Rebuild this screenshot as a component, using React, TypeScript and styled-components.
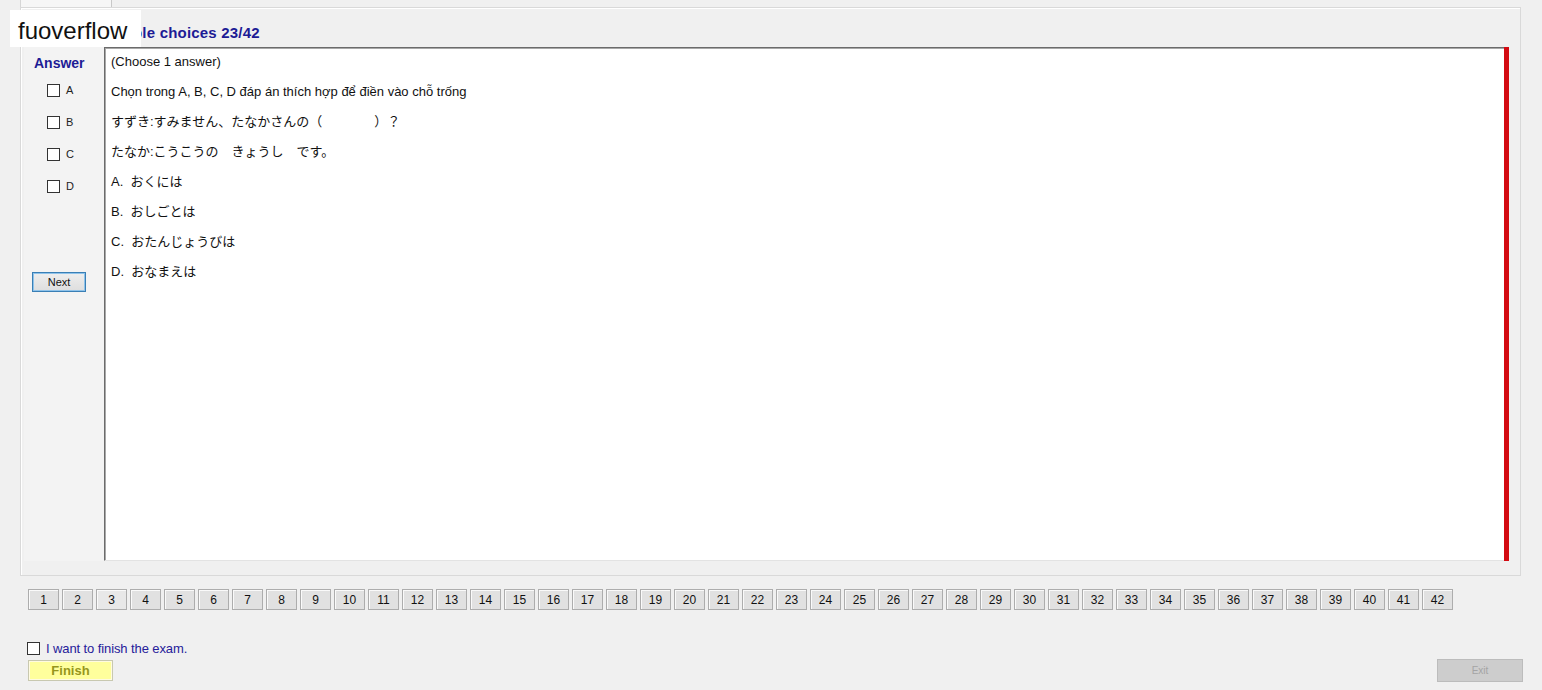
import React, { useState } from "react";
import styled, { createGlobalStyle } from "styled-components";

// globals
//--------------------------
const GlobalStyle = createGlobalStyle`
  html, body {
    margin: 0;
    padding: 0;
    background: #f0f0f0;
  }
  body {
    font-family: "Liberation Sans", "Noto Sans CJK JP", Arial, sans-serif;
    font-size: 12px;
    color: #000;
  }
`;

// styled-components
//--------------------------
const Page = styled.div`
  position: relative;
  width: 1542px;
  height: 690px;
  overflow: hidden;
  background: #f0f0f0;
`;

const TabStrip = styled.div`
  display: flex;
  height: 7px;
  padding-left: 20px;
`;

const TabPiece = styled.div`
  width: 90px;
  background: #f6f6f6;
  border-left: 1px solid #d6d6d6;
  border-right: 1px solid #c8c8c8;
`;

const GroupBox = styled.div`
  margin: 0 21px 0 20px;
  height: 569px;
  box-sizing: border-box;
  border: 1px solid #d9d9d9;
  box-shadow: inset 1px 1px 0 #fff;
  display: flex;
  flex-direction: column;
  padding: 0 11px 14px 3px;
`;

const Title = styled.div`
  height: 39px;
  box-sizing: border-box;
  display: flex;
  align-items: center;
  padding: 10px 0 0 73px;
  font-weight: bold;
  font-size: 15px;
  letter-spacing: 0.2px;
  color: #1d1b95;
`;

const Content = styled.div`
  flex: 1;
  display: flex;
`;

const AnswerPanel = styled.div`
  width: 80px;
  background: #f3f3f3;
  display: flex;
  flex-direction: column;
  align-items: flex-start;
`;

const AnswerLabel = styled.div`
  font-weight: bold;
  font-size: 14px;
  line-height: 16px;
  color: #1d1b95;
  margin: 8px 0 3px 10px;
`;

const ChoiceRow = styled.label`
  display: flex;
  align-items: center;
  gap: 6px;
  height: 32px;
  margin-left: 23px;
  font-size: 11px;
  color: #222;
`;

const Box = styled.span<{ $checked?: boolean }>`
  display: inline-block;
  width: 11px;
  height: 11px;
  border: 1px solid #333;
  background: #fff;
  position: relative;
  &::after {
    content: "${(p) => (p.$checked ? "✓" : "")}";
    position: absolute;
    left: 1px;
    top: -3px;
    font-size: 11px;
  }
`;

const NextButton = styled.button`
  margin-top: 70px;
  margin-left: 8px;
  width: 54px;
  height: 20px;
  padding: 0;
  border: 1px solid #3a7fb5;
  box-shadow: inset 0 0 0 1px #8fc3ea;
  background: linear-gradient(#eeeeee, #dedede);
  font-family: "Liberation Sans", Arial, sans-serif;
  font-size: 11px;
  color: #111;
`;

const QuestionBox = styled.div`
  flex: 1;
  background: #fff;
  border-top: 1px solid #6b6b6b;
  border-left: 1px solid #6b6b6b;
  box-shadow: inset 1px 1px 0 #a8a8a8;
  border-bottom: 1px solid #e3e3e3;
  padding: 0 6px;
  display: flex;
  flex-direction: column;
`;

const QLine = styled.div`
  line-height: 30px;
  height: 30px;
  font-size: 13px;
  color: #111;
  white-space: pre;
  &:first-child {
    margin-top: -1px;
  }
`;

const RedBar = styled.div`
  width: 5px;
  background: #d30b12;
`;

const NumberRow = styled.div`
  display: flex;
  gap: 3px;
  margin: 13px 0 0 28px;
`;

const NumButton = styled.button<{ $active?: boolean }>`
  width: 31px;
  height: 21px;
  padding: 0;
  border: 1px solid #adadad;
  box-shadow: inset 1px 1px 0 #fafafa;
  background: ${(p) => (p.$active ? "#e8e8e8" : "#e1e1e1")};
  font-family: "Liberation Sans", Arial, sans-serif;
  font-size: 12px;
  color: #111;
`;

const FinishCheck = styled.label`
  display: flex;
  align-items: center;
  gap: 6px;
  margin: 31px 0 0 27px;
  font-size: 13px;
  color: #26209a;
  letter-spacing: -0.1px;
`;

const BottomBar = styled.div`
  display: flex;
  justify-content: space-between;
  align-items: flex-start;
  margin: 4px 19px 0 28px;
`;

const FinishButton = styled.button`
  width: 85px;
  height: 21px;
  padding: 0;
  border: 1px solid #c8c8b0;
  box-shadow: inset 0 0 0 1px #fffbe0;
  background: #ffff9c;
  font-family: "Liberation Sans", Arial, sans-serif;
  font-weight: bold;
  font-size: 13px;
  color: #96961c;
`;

const ExitButton = styled.button`
  width: 86px;
  height: 23px;
  margin-top: -1px;
  padding: 0;
  border: 1px solid #bcbcbc;
  background: #cdcdcd;
  font-family: "Liberation Sans", Arial, sans-serif;
  font-size: 10px;
  color: #a4a4a4;
`;

const Watermark = styled.div`
  position: absolute;
  left: 10px;
  top: 10px;
  width: 131px;
  height: 37px;
  background: #fff;
  box-sizing: border-box;
  padding: 5px 0 0 8px;
  display: flex;
  align-items: center;
  font-family: "Liberation Sans", Arial, sans-serif;
  font-size: 24px;
  color: #111;
`;

//--------------------------

const lines = [
  "(Choose 1 answer)",
  "Chọn trong A, B, C, D đáp án thích hợp để điền vào chỗ trống",
  "すずき:すみません、たなかさんの（　　　　）？",
  "たなか:こうこうの　きょうし　です。",
  "A.  おくには",
  "B.  おしごとは",
  "C.  おたんじょうびは",
  "D.  おなまえは",
];

const App = () => {
  const [picked, setPicked] = useState<string[]>([]);
  const [finish, setFinish] = useState(false);

  const toggle = (c: string) =>
    setPicked((p) => (p.includes(c) ? p.filter((x) => x !== c) : [...p, c]));

  return (
    <Page>
      <GlobalStyle />
      <TabStrip>
        <TabPiece />
      </TabStrip>
      <GroupBox>
        <Title>Multiple choices 23/42</Title>
        <Content>
          <AnswerPanel>
            <AnswerLabel>Answer</AnswerLabel>
            {["A", "B", "C", "D"].map((c) => (
              <ChoiceRow key={c} onClick={() => toggle(c)}>
                <Box $checked={picked.includes(c)} />
                {c}
              </ChoiceRow>
            ))}
            <NextButton>Next</NextButton>
          </AnswerPanel>
          <QuestionBox>
            {lines.map((l, i) => (
              <QLine key={i}>{l}</QLine>
            ))}
          </QuestionBox>
          <RedBar />
        </Content>
      </GroupBox>
      <NumberRow>
        {Array.from({ length: 42 }, (_, i) => (
          <NumButton key={i} $active={i === 2}>
            {i + 1}
          </NumButton>
        ))}
      </NumberRow>
      <FinishCheck onClick={() => setFinish(!finish)}>
        <Box $checked={finish} />
        I want to finish the exam.
      </FinishCheck>
      <BottomBar>
        <FinishButton>Finish</FinishButton>
        <ExitButton disabled>Exit</ExitButton>
      </BottomBar>
      <Watermark>fuoverflow</Watermark>
    </Page>
  );
};

export default App;
